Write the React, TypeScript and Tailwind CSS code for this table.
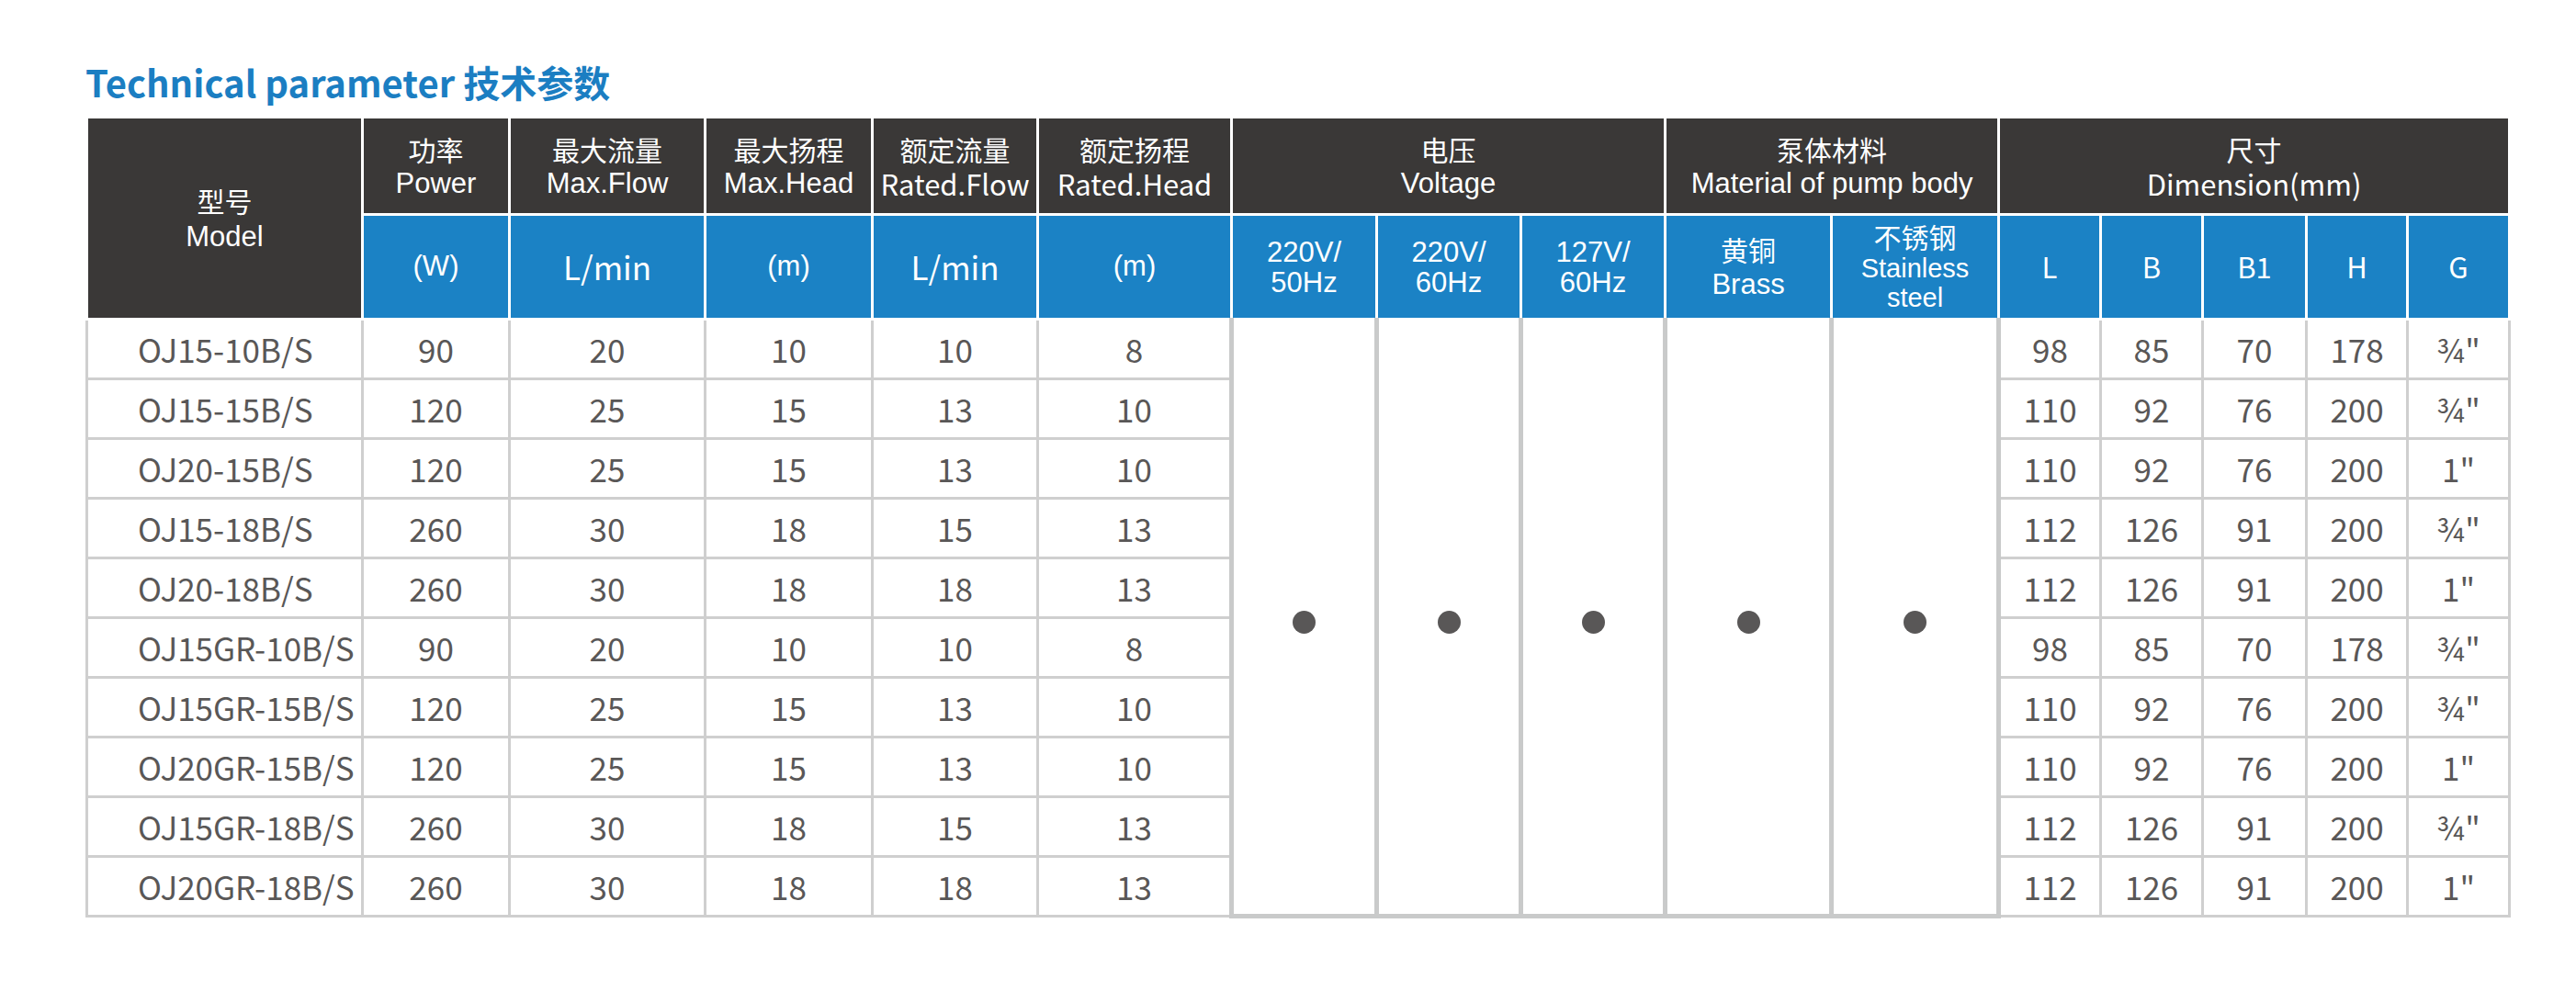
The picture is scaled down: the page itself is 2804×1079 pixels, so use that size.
const rows = [
  ['OJ15-10B/S', '90', '20', '10', '10', '8', '98', '85', '70', '178', '¾"'],
  ['OJ15-15B/S', '120', '25', '15', '13', '10', '110', '92', '76', '200', '¾"'],
  ['OJ20-15B/S', '120', '25', '15', '13', '10', '110', '92', '76', '200', '1"'],
  ['OJ15-18B/S', '260', '30', '18', '15', '13', '112', '126', '91', '200', '¾"'],
  ['OJ20-18B/S', '260', '30', '18', '18', '13', '112', '126', '91', '200', '1"'],
  ['OJ15GR-10B/S', '90', '20', '10', '10', '8', '98', '85', '70', '178', '¾"'],
  ['OJ15GR-15B/S', '120', '25', '15', '13', '10', '110', '92', '76', '200', '¾"'],
  ['OJ20GR-15B/S', '120', '25', '15', '13', '10', '110', '92', '76', '200', '1"'],
  ['OJ15GR-18B/S', '260', '30', '18', '15', '13', '112', '126', '91', '200', '¾"'],
  ['OJ20GR-18B/S', '260', '30', '18', '18', '13', '112', '126', '91', '200', '1"'],
];

const widths = [
  'w-[300px]', 'w-[160px]', 'w-[213px]', 'w-[182px]', 'w-[180px]', 'w-[211px]',
  'w-[158px]', 'w-[157px]', 'w-[157px]', 'w-[181px]', 'w-[182px]',
  'w-[111px]', 'w-[111px]', 'w-[113px]', 'w-[110px]', 'w-[111px]',
];

const dark = 'bg-[#3a3837] text-white border-[3px] border-white text-center align-middle font-normal';
const blue = 'bg-[#1b82c5] text-white border-[3px] border-white text-center align-middle font-normal';
const cell = 'border-[3px] border-[#cfcfcf] text-center align-middle text-[35px] text-[#595757]';
const merged = 'border-x-[5px] border-b-[5px] border-[#c9caca] pt-[16px] text-center align-middle';
const arial = "font-['Liberation_Sans','Noto_Sans_CJK_SC',sans-serif]";
const noto = "font-['Noto_Sans_CJK_SC',sans-serif]";

function Head2({ zh, en, enClass = arial }: { zh: string; en: string; enClass?: string }) {
  return (
    <div className="flex flex-col items-center">
      <span className={`${noto} text-[30px] leading-[37px]`}>{zh}</span>
      <span className={`${enClass} text-[31px] leading-[37px]`}>{en}</span>
    </div>
  );
}

function Dot() {
  return <span className="inline-block h-[25px] w-[25px] rounded-full bg-[#595757]" />;
}

export default function App() {
  return (
    <div className="bg-white pl-[93px] pt-[65px]">
      <h1 className={`${noto} text-[40px] font-bold leading-[48px] text-[#1b7ec2]`}>
        Technical parameter 技术参数
      </h1>
      <table className="mt-[13px] w-[2637px] table-fixed border-collapse">
        <colgroup>
          {widths.map((w, i) => (
            <col key={i} className={w} />
          ))}
        </colgroup>
        <thead>
          <tr className="h-[106px]">
            <th rowSpan={2} className={dark}>
              <div className="flex flex-col items-center">
                <span className={`${noto} text-[30px] leading-[39px]`}>型号</span>
                <span className={`${arial} text-[31px] leading-[39px]`}>Model</span>
              </div>
            </th>
            <th className={dark}><Head2 zh="功率" en="Power" /></th>
            <th className={dark}><Head2 zh="最大流量" en="Max.Flow" /></th>
            <th className={dark}><Head2 zh="最大扬程" en="Max.Head" /></th>
            <th className={dark}><Head2 zh="额定流量" en="Rated.Flow" enClass={noto} /></th>
            <th className={dark}><Head2 zh="额定扬程" en="Rated.Head" enClass={noto} /></th>
            <th colSpan={3} className={dark}><Head2 zh="电压" en="Voltage" /></th>
            <th colSpan={2} className={dark}><Head2 zh="泵体材料" en="Material of pump body" /></th>
            <th colSpan={5} className={dark}><Head2 zh="尺寸" en="Dimension(mm)" enClass={noto} /></th>
          </tr>
          <tr className="h-[114px]">
            <th className={`${blue} ${arial} text-[31px]`}>(W)</th>
            <th className={`${blue} ${noto} text-[35px]`}>L/min</th>
            <th className={`${blue} ${arial} text-[31px]`}>(m)</th>
            <th className={`${blue} ${noto} text-[35px]`}>L/min</th>
            <th className={`${blue} ${arial} text-[31px]`}>(m)</th>
            {['50Hz', '60Hz'].map((hz, i) => (
              <th key={i} className={`${blue} ${arial} text-[31px] leading-[33px]`}>
                220V/<br />{hz}
              </th>
            ))}
            <th className={`${blue} ${arial} text-[31px] leading-[33px]`}>
              127V/<br />60Hz
            </th>
            <th className={`${blue} ${arial} text-[31px] leading-[36px]`}>
              <span className={`${noto} text-[30px]`}>黄铜</span><br />Brass
            </th>
            <th className={`${blue} ${arial} text-[29px] leading-[32px]`}>
              <span className={`${noto} text-[30px]`}>不锈钢</span><br />Stainless<br />steel
            </th>
            {['L', 'B', 'B1', 'H', 'G'].map((d) => (
              <th key={d} className={`${blue} ${noto} text-[31px]`}>{d}</th>
            ))}
          </tr>
        </thead>
        <tbody className={noto}>
          {rows.map((r, ri) => (
            <tr key={ri} className="h-[65px]">
              <td className={`${cell} pl-[54px] text-left`}>{r[0]}</td>
              {r.slice(1, 6).map((v, i) => (
                <td key={i} className={cell}>{v}</td>
              ))}
              {ri === 0 &&
                [0, 1, 2, 3, 4].map((i) => (
                  <td key={`m${i}`} rowSpan={10} className={merged}>
                    <Dot />
                  </td>
                ))}
              {r.slice(6).map((v, i) => (
                <td key={`d${i}`} className={cell}>{v}</td>
              ))}
            </tr>
          ))}
        </tbody>
      </table>
    </div>
  );
}
